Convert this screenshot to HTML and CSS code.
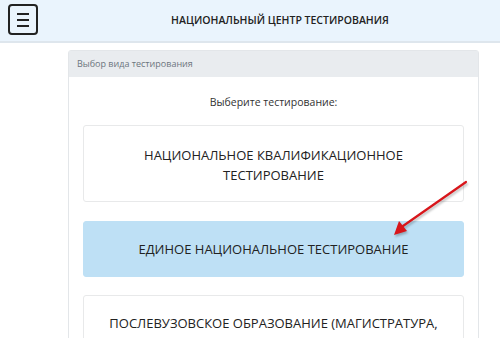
FILE: index.html
```html
<!DOCTYPE html>
<html lang="ru">
<head>
    <meta charset="UTF-8">
    <meta name="viewport" content="width=device-width, initial-scale=1.0">
    <title>Национальный центр тестирования</title>
    <link rel="stylesheet" href="styles.css">
</head>
<body>

    <header class="topbar">
        <button class="menu-btn" aria-label="Меню">
            <span></span><span></span><span></span>
        </button>
        <div class="topbar-title">НАЦИОНАЛЬНЫЙ ЦЕНТР ТЕСТИРОВАНИЯ</div>
    </header>

    <div class="card">
        <div class="card-header">Выбор вида тестирования</div>
        <div class="card-body">
            <p class="lead">Выберите тестирование:</p>

            <a class="test-tile first">НАЦИОНАЛЬНОЕ КВАЛИФИКАЦИОННОЕ<br>ТЕСТИРОВАНИЕ</a>
            <a class="test-tile active">ЕДИНОЕ НАЦИОНАЛЬНОЕ ТЕСТИРОВАНИЕ</a>
            <a class="test-tile">ПОСЛЕВУЗОВСКОЕ ОБРАЗОВАНИЕ (МАГИСТРАТУРА,<br>ДОКТОРАНТУРА)</a>
        </div>
    </div>

    <!-- красная стрелка поверх страницы -->
    <svg class="pointer" width="90" height="65" viewBox="0 0 90 65">
        <line x1="81" y1="7" x2="18" y2="51" stroke="#d8161b" stroke-width="2.2" stroke-linecap="round"/>
        <polygon points="9,60 14,46 22,56" fill="#d8161b"/>
    </svg>

</body>
</html>
```

FILE: styles.css
```css
body {
    margin: 0;
    font-family: "Open Sans", "Noto Sans", sans-serif;
    color: #212529;
    background: #fff;
    position: relative;
    height: 338px;
    overflow: hidden;
}
.topbar {
    height: 43px;
    background-color: #eaf4fd;
    border-bottom: 2px solid #dee6ed;
    display: flex;
    align-items: center;
    padding: 0 8px;
    box-sizing: border-box;
}
.menu-btn {
    width: 30px;
    height: 31px;
    margin-top: -2px;
    border: 2px solid #222;
    border-radius: 4px;
    background: transparent;
    padding: 0;
    display: flex;
    flex-direction: column;
    align-items: center;
    justify-content: center;
    gap: 4px;
}
.menu-btn span {
    display: block;
    width: 12px;
    height: 2px;
    background: #222;
}
.topbar-title {
    flex: 1;
    text-align: center;
    padding-left: 30px;
    margin-top: -2px;
    font-size: 10.5px;
    font-weight: 600;
    color: #222;
}
.card {
    margin: 7px 0 0 68px;
    width: 411px;
    border: 1px solid #e3e6e9;
    border-radius: 3px;
    box-sizing: border-box;
}
.card-header {
    height: 26px;
    line-height: 26px;
    padding-left: 8px;
    background-color: #e9ecef;
    font-size: 9px;
    color: #6c757d;
}
.card-body {
    padding: 17px 14px 0;
}
.lead {
    margin: 0 0 15px;
    text-align: center;
    font-size: 10.5px;
    line-height: 16px;
    color: #333;
}
.test-tile {
    display: block;
    padding: 17px 10px;
    margin-bottom: 18px;
    border: 1px solid #e8e9ea;
    border-radius: 3px;
    text-align: center;
    font-size: 13px;
    line-height: 20px;
    color: #222;
}
.test-tile.first {
    padding: 19px 10px 16px;
    margin-bottom: 19px;
}
.test-tile.active {
    background-color: #bee0f5;
    border-color: #bee0f5;
}
.pointer {
    position: absolute;
    left: 385px;
    top: 175px;
    filter: drop-shadow(1px 2px 1px rgba(0, 0, 0, 0.25));
}
```
